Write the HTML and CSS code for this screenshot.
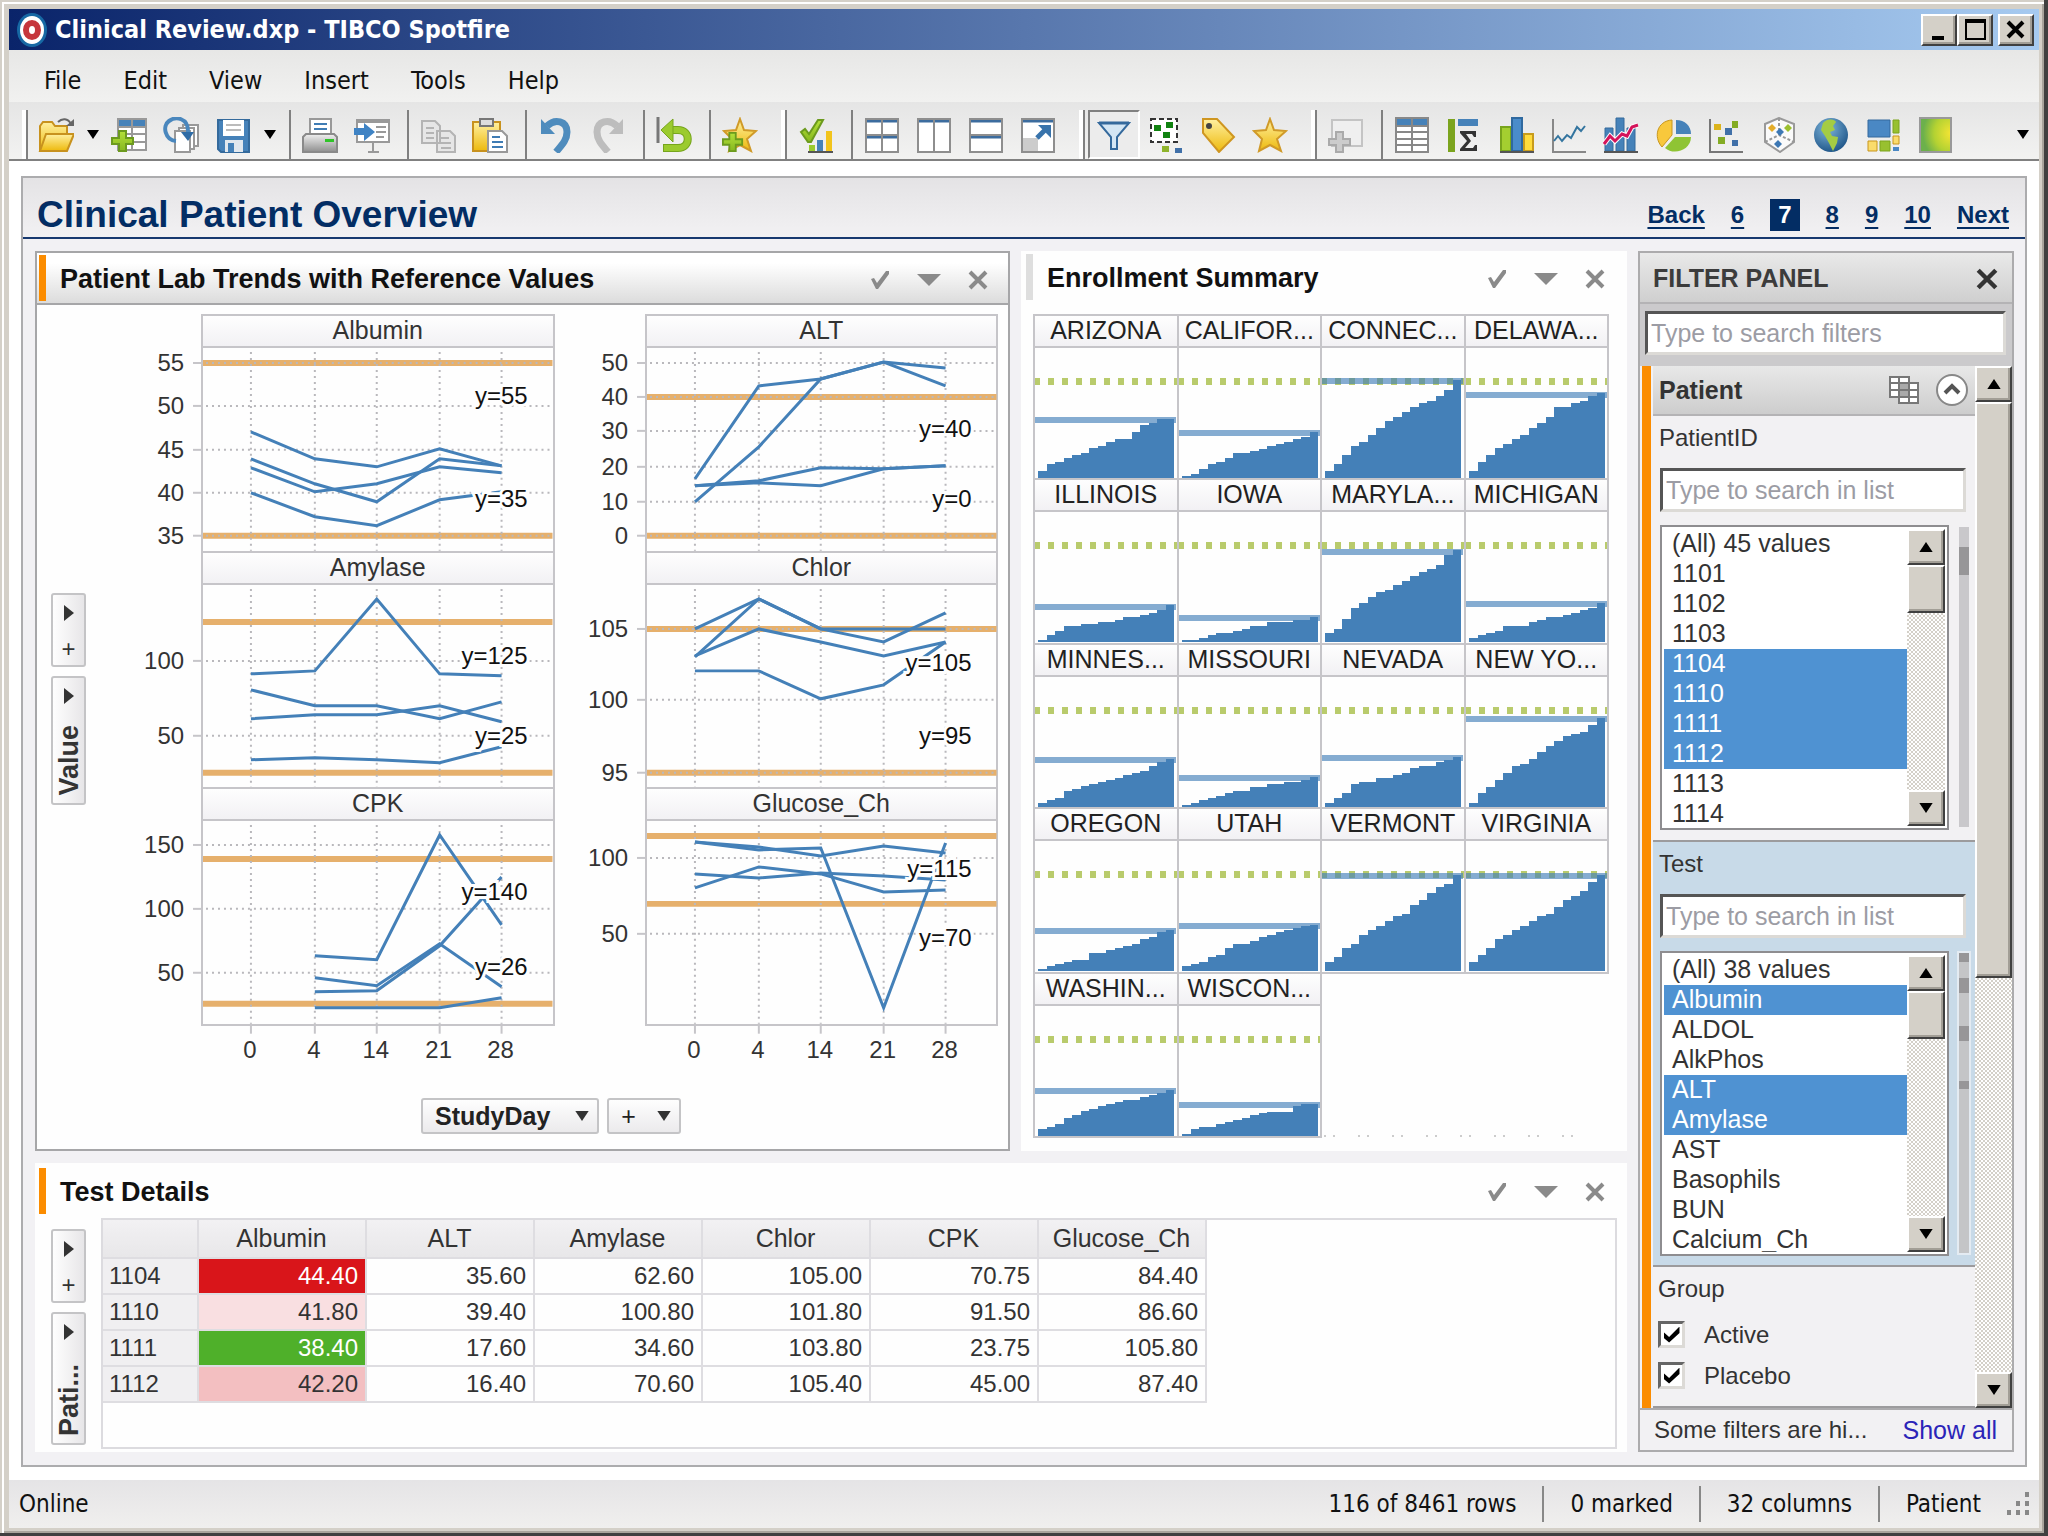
FILE: index.html
```html
<!DOCTYPE html>
<html lang="en">
<head>
<meta charset="utf-8">
<title>Clinical Review.dxp - TIBCO Spotfire</title>
<link rel="stylesheet" href="styles.css">
</head>
<body>
<svg class="defs" aria-hidden="true">
  <defs>
    <linearGradient id="gold" x1="0" y1="0" x2="0" y2="1"><stop offset="0" stop-color="#fff0a0"/><stop offset="1" stop-color="#edb90c"/></linearGradient>
    <linearGradient id="lime" x1="0" y1="0" x2="0" y2="1"><stop offset="0" stop-color="#b4e03a"/><stop offset="1" stop-color="#86b81e"/></linearGradient>
    <linearGradient id="steel" x1="0" y1="0" x2="0" y2="1"><stop offset="0" stop-color="#f0f0f0"/><stop offset="1" stop-color="#8f8f8f"/></linearGradient>
    <radialGradient id="sea" cx=".4" cy=".3" r=".8"><stop offset="0" stop-color="#7fb6dc"/><stop offset="1" stop-color="#154c80"/></radialGradient>
    <radialGradient id="heat" cx="1" cy=".45" r=".9"><stop offset="0" stop-color="#f6e534"/><stop offset=".6" stop-color="#b4d232"/><stop offset="1" stop-color="#6cb04c"/></radialGradient>
    <symbol id="check" viewBox="0 0 20 20"><path d="M1 9l3-1 3 5L16 1h3v3L8 19H6z"/></symbol>
    <symbol id="down" viewBox="0 0 24 12"><path d="M0 0h24L12 12z"/></symbol>
    <symbol id="cross" viewBox="0 0 20 20"><path d="M2 2l16 16M18 2L2 18" fill="none" stroke="currentColor" stroke-width="4"/></symbol>
    <symbol id="caret" viewBox="0 0 12 9"><path d="M0 0h12L6 9z"/></symbol>
    <symbol id="side" viewBox="0 0 10 16"><path d="M0 0l10 8-10 8z"/></symbol>
    <symbol id="star" viewBox="0 0 36 36"><path d="M18 2l4 11 12 1-9 8 4 12-11-6-11 6 3-12-8-8 12-1z" fill="url(#gold)" stroke="#d09a28" stroke-width="2"/></symbol>
    <symbol id="plus" viewBox="0 0 24 24"><path d="M8 2h7v7h7v6h-7v7H8v-7H1V9h7z" fill="url(#lime)" stroke="#6c9a1e" stroke-width="2"/></symbol>
  </defs>
</svg>

<div class="window">
  <header class="titlebar">
    <svg class="app-logo" viewBox="0 0 32 36" width="32" height="36"><ellipse cx="16" cy="18" rx="15" ry="17" fill="#1668a4"/><ellipse cx="16" cy="18" rx="12" ry="14" fill="#fff"/><ellipse cx="16" cy="18" rx="6" ry="7" fill="#fff" stroke="#c6363c" stroke-width="6"/></svg>
    <h1 class="app-title">Clinical Review.dxp - TIBCO Spotfire</h1>
    <div class="win-buttons">
      <button class="bevel win-btn" aria-label="Minimize"><svg viewBox="0 0 28 26"><path d="M7 19h12v4H7z"/></svg></button>
      <button class="bevel win-btn" aria-label="Maximize"><svg viewBox="0 0 28 26"><path d="M4 2h21v21H4zM6 6v15h17V6z" fill-rule="evenodd"/></svg></button>
      <button class="bevel win-btn win-close" aria-label="Close"><svg viewBox="0 0 28 26"><path d="M6 5l15 15M21 5L6 20" stroke="#000" stroke-width="4"/></svg></button>
    </div>
  </header>

  <nav class="menubar">
    <button>File</button><button>Edit</button><button>View</button><button>Insert</button><button>Tools</button><button>Help</button>
  </nav>

  <div class="toolbar">
    <span class="grip grip-first"></span>
    <button class="tool" aria-label="Open"><svg viewBox="0 0 36 36"><path d="M2 34V9l3-4h9l3 4h12v10" fill="url(#gold)" stroke="#c8921e" stroke-width="2"/><path d="M2 34l6-17h28l-7 17z" fill="url(#gold)" stroke="#c8921e" stroke-width="2"/><path d="M20 5c4-4 10-4 13 2" fill="none" stroke="#666" stroke-width="2"/><path d="M28 9h8V2z" fill="#666"/></svg></button>
    <button class="tool-drop" aria-label="Open menu"><svg><use href="#caret"/></svg></button>
    <button class="tool" aria-label="Add data table"><svg viewBox="0 0 36 36"><path d="M7 2h28v31H7z" fill="#fff" stroke="#999" stroke-width="2"/><path d="M8 3h26v6H8z" fill="#4682b9"/><path d="M7 10h28M7 17h28M7 25h28M21 2v31" stroke="#999" stroke-width="2"/><use href="#plus" x="0" y="12" width="24" height="24"/></svg></button>
    <button class="tool" aria-label="Replace data"><svg viewBox="0 0 36 36"><path d="M20 8h15v21H20z" fill="#fff" stroke="#999" stroke-width="2"/><path d="M16 11h15v21H16z" fill="#fff" stroke="#999" stroke-width="2"/><path d="M12 14h15v21H12z" fill="#fff" stroke="#999" stroke-width="2"/><path d="M13 24C2 23-1 9 6 4s19-3 19 10v4" fill="none" stroke="#4a87bd" stroke-width="4"/><path d="M18 15h13l-6 9z" fill="#2f6ca6"/></svg></button>
    <button class="tool" aria-label="Save"><svg viewBox="0 0 36 36"><path d="M3 3h31v32H6l-3-3z" fill="#4682b9" stroke="#346a9c" stroke-width="2"/><path d="M8 3h21v16H8z" fill="#fff"/><path d="M11 8h15M11 13h15" stroke="#bbb" stroke-width="2"/><path d="M10 23h18v12H10z" fill="#e2e8ee"/><path d="M13 26h6v9h-6z" fill="#4682b9"/></svg></button>
    <button class="tool-drop" aria-label="Save menu"><svg><use href="#caret"/></svg></button>
    <span class="sep"></span>
    <button class="tool" aria-label="Print"><svg viewBox="0 0 36 36"><path d="M8 18V2h21v16" fill="#fff" stroke="#999" stroke-width="2"/><path d="M12 7h13M12 12h13" stroke="#3f7cb4" stroke-width="2"/><path d="M1 35V20l3-3h28l3 3v15z" fill="url(#steel)" stroke="#8a8a8a" stroke-width="2"/><path d="M23 22h9v3h-9z" fill="#2fc428"/></svg></button>
    <button class="tool" aria-label="Export"><svg viewBox="0 0 36 36"><path d="M3 4h32v21H3z" fill="#fff" stroke="#999" stroke-width="2"/><path d="M2 2h34v4H2z" fill="#999"/><path d="M22 10h10M22 15h10M22 20h8M19 26v9M14 35h11" stroke="#999" stroke-width="2"/><path d="M0 11h10V6l11 9-11 9v-6H0z" fill="#3f83c4"/></svg></button>
    <span class="sep"></span>
    <button class="tool" aria-label="Copy"><svg viewBox="0 0 36 36"><path d="M2 4h13l5 5v17H2zM17 14h13l5 5v16H17z" fill="#e6e6e6" stroke="#b4b4b4" stroke-width="2"/><path d="M6 11h8M6 16h8M6 21h8M21 21h8M21 26h10M21 31h10" stroke="#b4b4b4" stroke-width="2"/></svg></button>
    <button class="tool" aria-label="Paste"><svg viewBox="0 0 36 36"><path d="M1 5h27v29H1z" fill="url(#gold)" stroke="#c8921e" stroke-width="2"/><path d="M8 2h13v7H8z" fill="#ddd" stroke="#777" stroke-width="2"/><path d="M16 14h14l5 5v16H16z" fill="#fff" stroke="#999" stroke-width="2"/><path d="M20 20h8M20 25h11M20 30h11" stroke="#3f7cb4" stroke-width="2"/></svg></button>
    <span class="sep"></span>
    <button class="tool" aria-label="Undo"><svg viewBox="0 0 36 36"><path d="M9 9c8-8 20-5 20 6 0 8-5 13-11 20" fill="none" stroke="#4f8cbd" stroke-width="7"/><path d="M3 2v15h14z" fill="#4f8cbd"/></svg></button>
    <button class="tool" aria-label="Redo"><svg viewBox="0 0 36 36"><path d="M27 9C19 1 7 4 7 15c0 8 5 13 11 20" fill="none" stroke="#bdbdbd" stroke-width="7"/><path d="M33 2v15H19z" fill="#bdbdbd"/></svg></button>
    <span class="sep"></span>
    <button class="tool" aria-label="Revert"><svg viewBox="0 0 36 36"><path d="M2 0v26" stroke="#777" stroke-width="3"/><path d="M13 13h9c13 0 13 18 0 18H7" fill="none" stroke="#76a51c" stroke-width="8"/><path d="M13 13h9c13 0 13 18 0 18H8" fill="none" stroke="#9bcb2e" stroke-width="6"/><path d="M5 13L17 2v23z" fill="#9bcb2e" stroke="#76a51c"/></svg></button>
    <span class="sep"></span>
    <button class="tool" aria-label="Add bookmark"><svg viewBox="0 0 36 36"><use href="#star" width="36" height="36"/><use href="#plus" x="0" y="14" width="22" height="22"/></svg></button>
    <span class="grip"></span>
    <button class="tool" aria-label="Analysis"><svg viewBox="0 0 36 36"><path d="M3 15l4-3 4 5L20 3h5L13 25h-3z" fill="url(#lime)" stroke="#6c9a1e" stroke-width="2"/><path d="M11 28h6v7h-6z" fill="#9bcb2e"/><path d="M19 23h6v12h-6z" fill="#4682b9"/><path d="M28 14h6v21h-6z" fill="#f2c41c"/><path d="M10 35h25" stroke="#555" stroke-width="2"/></svg></button>
    <span class="sep"></span>
    <button class="tool" aria-label="Tile grid"><svg viewBox="0 0 36 36"><path d="M2 3h32v32H2z" fill="#fff"/><path d="M2 4h32M2 20h32" stroke="#3c6c9e" stroke-width="3"/><path d="M2 2h32v33H2zM18 2v33M2 18h32" fill="none" stroke="#8e8e8e" stroke-width="2"/></svg></button>
    <button class="tool" aria-label="Side by side"><svg viewBox="0 0 36 36"><path d="M2 3h32v32H2z" fill="#fff"/><path d="M2 4h32" stroke="#3c6c9e" stroke-width="3"/><path d="M2 2h32v33H2zM18 2v33" fill="none" stroke="#8e8e8e" stroke-width="2"/></svg></button>
    <button class="tool" aria-label="Stacked"><svg viewBox="0 0 36 36"><path d="M2 3h32v32H2z" fill="#fff"/><path d="M2 4h32M2 20h32" stroke="#3c6c9e" stroke-width="3"/><path d="M2 2h32v33H2zM2 18h32" fill="none" stroke="#8e8e8e" stroke-width="2"/></svg></button>
    <button class="tool" aria-label="Maximize visualization"><svg viewBox="0 0 36 36"><path d="M2 3h32v32H2z" fill="#fff"/><path d="M2 4h32" stroke="#3c6c9e" stroke-width="3"/><path d="M3 21h15v13H3z" fill="#ccc"/><path d="M2 2h32v33H2z" fill="none" stroke="#8e8e8e" stroke-width="2"/><path d="M17 21l9-9" stroke="#3873ab" stroke-width="5"/><path d="M18 8h13v13z" fill="#3873ab"/></svg></button>
    <span class="grip"></span>
    <button class="tool tool-pressed" aria-label="Filters" aria-pressed="true"><svg viewBox="0 0 36 36"><path d="M3 6h30L21 20v12h-6V20z" fill="#d4e6f4" stroke="#34699c" stroke-width="2"/><path d="M3 6h30" stroke="#34699c" stroke-width="3"/></svg></button>
    <button class="tool" aria-label="Marking"><svg viewBox="0 0 36 36"><path d="M3 2h26v23H3z" fill="#fff" stroke="#333" stroke-width="2" stroke-dasharray="5 3"/><path d="M6 8h7v6H6zM18 5h7v6h-7zM15 15h7v6h-7z" fill="#108210"/><path d="M14 29h7v6h-7z" fill="#8fb42c"/><path d="M27 31h7v5h-7z" fill="#4070a8"/></svg></button>
    <button class="tool" aria-label="Tags"><svg viewBox="0 0 36 36"><path d="M3 2h14l17 18-15 15L3 16z" fill="url(#gold)" stroke="#cf9620" stroke-width="2"/><circle cx="9" cy="9" r="3" fill="#444"/></svg></button>
    <button class="tool" aria-label="Bookmarks"><svg viewBox="0 0 36 36"><use href="#star" width="36" height="36"/></svg></button>
    <span class="grip"></span>
    <button class="tool" aria-label="New visualization" disabled><svg viewBox="0 0 36 36"><path d="M4 3h30v26H4z" fill="#efefef" stroke="#c4c4c4" stroke-width="2"/><path d="M8 15h7v7h7v6h-7v7H8v-7H1v-6h7z" fill="#ccc" stroke="#aaa" stroke-width="2"/></svg></button>
    <span class="sep"></span>
    <div class="chart-tools">
      <button class="tool" aria-label="Table"><svg viewBox="0 0 36 36"><path d="M2 1h32v34H2z" fill="#fff" stroke="#888" stroke-width="2"/><path d="M3 2h30v6H3z" fill="#4682b9"/><path d="M2 9h32M2 15h32M2 22h32M2 28h32M18 1v34" stroke="#888" stroke-width="2"/></svg></button>
      <button class="tool" aria-label="Cross table"><svg viewBox="0 0 36 36"><path d="M2 2h7v33H2z" fill="#7ba41e"/><path d="M12 2h20v7H12z" fill="#4682b9"/><path d="M14 14h16v6h-2l-2-3h-6l5 7-6 7h8l2-3h2v6H14v-2l7-8-7-8z" fill="#333"/></svg></button>
      <button class="tool" aria-label="Bar chart"><svg viewBox="0 0 36 36"><path d="M2 10h10v24H2z" fill="#a4cf30" stroke="#78a41c" stroke-width="2"/><path d="M25 17h9v17h-9z" fill="#ffdc3c" stroke="#c89c1c" stroke-width="2"/><path d="M13 1h10v33H13z" fill="#4a8cca" stroke="#2f699f" stroke-width="2"/><path d="M1 35h34" stroke="#555" stroke-width="2"/></svg></button>
      <button class="tool" aria-label="Line chart"><svg viewBox="0 0 36 36"><path d="M2 2v33h33" fill="none" stroke="#888" stroke-width="2"/><path d="M3 24l4-5 4 5 5-6 4 3 6-11 4 4 4-5" fill="none" stroke="#34759f" stroke-width="2"/></svg></button>
      <button class="tool" aria-label="Combination chart"><svg viewBox="0 0 36 36"><path d="M2 11h8v23H2zM13 1h8v33h-8zM24 11h8v23h-8z" fill="#4682b9" stroke="#346a9c"/><path d="M1 27l6-8 5 5 7-7 5 2 5-9 6-2" fill="none" stroke="#fff" stroke-width="5"/><path d="M1 27l6-8 5 5 7-7 5 2 5-9 6-2" fill="none" stroke="#d4145a" stroke-width="3"/><path d="M1 35h34" stroke="#555" stroke-width="2"/></svg></button>
      <button class="tool" aria-label="Pie chart"><svg viewBox="0 0 36 36"><path d="M16 3v15L6 30C-3 20 1 4 16 3z" fill="#f8c83c" stroke="#c8961c" stroke-width="1"/><path d="M20 3c9 0 15 6 15 14H20z" fill="#4682b9"/><path d="M19 20h16c0 13-17 19-26 11z" fill="#8fc434"/></svg></button>
      <button class="tool" aria-label="Scatter plot"><svg viewBox="0 0 36 36"><path d="M2 2v33h33" fill="none" stroke="#777" stroke-width="2"/><path d="M6 7h7v6H6z" fill="#dcb41c"/><path d="M24 4h6v7h-6zM10 20h7v7h-7z" fill="#84ac24"/><path d="M17 11h7v7h-7zM24 23h6v6h-6z" fill="#4070a8"/></svg></button>
      <button class="tool" aria-label="3D scatter plot"><svg viewBox="0 0 36 36"><path d="M4 7l14-6 15 6v18L19 35 4 25z" fill="#fafafa" stroke="#999" stroke-width="2"/><path d="M4 25l14-7 15 7M18 1v17" fill="none" stroke="#999" stroke-width="2" stroke-dasharray="3 2"/><path d="M11 7l4 4-4 4-4-4z" fill="#e4ac28"/><path d="M27 7l4 4-4 4-4-4z" fill="#9cc030"/><path d="M19 11l4 4-4 4-4-4zM17 23l4 4-4 4-4-4z" fill="#3d78b4"/></svg></button>
      <button class="tool" aria-label="Map chart"><svg viewBox="0 0 36 36"><circle cx="18" cy="18" r="17" fill="url(#sea)"/><path d="M10 6c4-5 12-4 13-1l-3 4 2 4-5 2 2 4 6 1-1 6-4 8-4-8-4-7-4-6z" fill="#a4cc44"/></svg></button>
      <button class="tool" aria-label="Treemap"><svg viewBox="0 0 36 36"><path d="M3 3h22v17H3z" fill="#4a88c4" stroke="#34699c"/><path d="M28 3h6v13h-6zM15 24h10v10H15z" fill="#98c030" stroke="#7ca41c"/><path d="M28 19h6v8h-6zM3 24h9v10H3z" fill="#fadc6c" stroke="#c8961c"/><path d="M28 30h6v4h-6z" fill="#4a88c4"/></svg></button>
      <button class="tool" aria-label="Heat map"><svg viewBox="0 0 36 36"><path d="M2 1h31v34H2z" fill="url(#heat)" stroke="#999" stroke-width="2"/></svg></button>
    </div>
    <button class="tool-drop tool-overflow" aria-label="More"><svg><use href="#caret"/></svg></button>
  </div>

  <main class="workspace">
    <section class="page">
      <div class="page-head">
        <h2>Clinical Patient Overview</h2>
        <nav class="pager">
          <a href="#back">Back</a><a href="#6">6</a><a href="#7" class="current" aria-current="page">7</a><a href="#8">8</a><a href="#9">9</a><a href="#10">10</a><a href="#next">Next</a>
        </nav>
      </div>

      <div class="page-body">
        <article class="panel panel-active trends">
          <header class="panel-head">
            <span class="accent"></span>
            <h3>Patient Lab Trends with Reference Values</h3>
            <button aria-label="Apply"><svg width="20" height="20"><use href="#check"/></svg></button>
            <button aria-label="Menu"><svg width="24" height="12"><use href="#down"/></svg></button>
            <button aria-label="Close"><svg width="20" height="20"><use href="#cross"/></svg></button>
          </header>
          <div class="trends-body">
            <div class="axis-buttons">
              <button class="axis-btn" aria-label="Add value"><svg width="10" height="16"><use href="#side"/></svg><span class="axis-plus">+</span></button>
              <button class="axis-btn axis-value"><svg width="10" height="16"><use href="#side"/></svg><span class="turned">Value</span></button>
            </div>
            <div class="trellis-wrap">
              <div class="trellis" id="trends"></div>
              <div class="x-buttons">
                <button class="axis-btn-h">StudyDay<svg width="16" height="10"><use href="#caret"/></svg></button>
                <button class="axis-btn-h axis-btn-add"><span class="thin">+</span><svg width="16" height="10"><use href="#caret"/></svg></button>
              </div>
            </div>
          </div>
        </article>

        <article class="panel enrollment">
          <header class="panel-head">
            <span class="accent"></span>
            <h3>Enrollment Summary</h3>
            <button aria-label="Apply"><svg width="20" height="20"><use href="#check"/></svg></button>
            <button aria-label="Menu"><svg width="24" height="12"><use href="#down"/></svg></button>
            <button aria-label="Close"><svg width="20" height="20"><use href="#cross"/></svg></button>
          </header>
          <div class="states" id="states"></div>
        </article>

        <article class="panel details">
          <header class="panel-head">
            <span class="accent accent-on"></span>
            <h3>Test Details</h3>
            <button aria-label="Apply"><svg width="20" height="20"><use href="#check"/></svg></button>
            <button aria-label="Menu"><svg width="24" height="12"><use href="#down"/></svg></button>
            <button aria-label="Close"><svg width="20" height="20"><use href="#cross"/></svg></button>
          </header>
          <div class="details-body">
            <div class="axis-buttons">
              <button class="axis-btn" aria-label="Add column"><svg width="10" height="16"><use href="#side"/></svg><span class="axis-plus">+</span></button>
              <button class="axis-btn axis-value"><svg width="10" height="16"><use href="#side"/></svg><span class="turned">Pati...</span></button>
            </div>
            <div class="table-box">
              <table>
                <thead><tr><th></th><th>Albumin</th><th>ALT</th><th>Amylase</th><th>Chlor</th><th>CPK</th><th>Glucose_Ch</th></tr></thead>
                <tbody>
                  <tr><th>1104</th><td class="high">44.40</td><td>35.60</td><td>62.60</td><td>105.00</td><td>70.75</td><td>84.40</td></tr>
                  <tr><th>1110</th><td class="mild">41.80</td><td>39.40</td><td>100.80</td><td>101.80</td><td>91.50</td><td>86.60</td></tr>
                  <tr><th>1111</th><td class="low">38.40</td><td>17.60</td><td>34.60</td><td>103.80</td><td>23.75</td><td>105.80</td></tr>
                  <tr><th>1112</th><td class="raised">42.20</td><td>16.40</td><td>70.60</td><td>105.40</td><td>45.00</td><td>87.40</td></tr>
                </tbody>
              </table>
            </div>
          </div>
        </article>

        <aside class="filters">
          <header class="filters-head"><h3>FILTER PANEL</h3><button aria-label="Close filters"><svg width="22" height="22"><use href="#cross"/></svg></button></header>
          <div class="filters-search"><input class="field" type="text" aria-label="Search filters" placeholder="Type to search filters"></div>
          <div class="filters-main">
            <div class="filters-list">
              <header class="group-head">
                <h4>Patient</h4>
                <svg viewBox="0 0 30 30" width="30" height="30"><path d="M1 2h19v20H1z" fill="#fff" stroke="#777" stroke-width="2"/><path d="M1 8h19M1 15h19M10 2v20" stroke="#777" stroke-width="2"/><path d="M10 8h19v20H10z" fill="#fff" stroke="#777" stroke-width="2"/><path d="M11 9h9v12h-9z" fill="#aaa"/><path d="M10 15h19M10 22h19M20 8v20" stroke="#777" stroke-width="2"/></svg>
                <button aria-label="Collapse"><svg viewBox="0 0 34 34" width="34" height="34"><circle cx="17" cy="17" r="15" fill="#fff" stroke="#888" stroke-width="2"/><path d="M10 20l7-7 7 7" fill="none" stroke="#555" stroke-width="4"/></svg></button>
              </header>
              <section class="filter">
                <label for="patient-search">PatientID</label>
                <input class="field" id="patient-search" type="text" placeholder="Type to search in list">
                <div class="list-row">
                  <div class="list-box">
                    <select multiple size="10" aria-label="PatientID values">
                      <option>(All) 45 values</option><option>1101</option><option>1102</option><option>1103</option><option selected>1104</option><option selected>1110</option><option selected>1111</option><option selected>1112</option><option>1113</option><option>1114</option>
                    </select>
                    <div class="scroll"><button class="bevel" aria-label="Scroll up"><svg><use href="#caret"/></svg></button><div class="bevel thumb"></div><button class="bevel scroll-down" aria-label="Scroll down"><svg><use href="#caret"/></svg></button></div>
                  </div>
                  <div class="range range-patient"></div>
                </div>
              </section>
              <section class="filter filter-active">
                <label for="test-search">Test</label>
                <input class="field" id="test-search" type="text" placeholder="Type to search in list">
                <div class="list-row">
                  <div class="list-box">
                    <select multiple size="10" aria-label="Test values">
                      <option>(All) 38 values</option><option selected>Albumin</option><option>ALDOL</option><option>AlkPhos</option><option selected>ALT</option><option selected>Amylase</option><option>AST</option><option>Basophils</option><option>BUN</option><option>Calcium_Ch</option>
                    </select>
                    <div class="scroll"><button class="bevel" aria-label="Scroll up"><svg><use href="#caret"/></svg></button><div class="bevel thumb"></div><button class="bevel scroll-down" aria-label="Scroll down"><svg><use href="#caret"/></svg></button></div>
                  </div>
                  <div class="range range-test"></div>
                </div>
              </section>
              <fieldset class="filter filter-checks">
                <legend>Group</legend>
                <label><input type="checkbox" checked>Active</label>
                <label><input type="checkbox" checked>Placebo</label>
              </fieldset>
            </div>
            <div class="scroll scroll-main"><button class="bevel" aria-label="Scroll up"><svg><use href="#caret"/></svg></button><div class="bevel thumb"></div><button class="bevel scroll-down" aria-label="Scroll down"><svg><use href="#caret"/></svg></button></div>
          </div>
          <footer class="filters-foot"><span>Some filters are hi...</span><a href="#all">Show all</a></footer>
        </aside>
      </div>
    </section>
  </main>

  <footer class="statusbar">
    <span class="online">Online</span><span>116 of 8461 rows</span><span>0 marked</span><span>32 columns</span><span class="last">Patient</span>
    <svg class="size-grip" viewBox="0 0 24 24" width="24" height="24"><path d="M18 0h4v5h-4zM18 9h4v5h-4zM9 9h4v5H9zM18 18h4v5h-4zM9 18h4v5H9zM0 18h4v5H0z" fill="#888"/></svg>
  </footer>
</div>
<script src="script.js"></script>
</body>
</html>
```
FILE: styles.css
```css
* { box-sizing: border-box; }

body {
  margin: 0;
  font-family: "Liberation Sans", Arial, sans-serif;
  font-size: 24px;
  color: #333;
}

h1, h2, h3, h4 { margin: 0; font-weight: bold; }
button { margin: 0; padding: 0; border: 0; background: none; font: inherit; color: inherit; }
svg { display: block; }
.defs { position: absolute; width: 0; height: 0; }

/* Window frame */
.window {
  display: flex;
  flex-direction: column;
  min-height: 100vh;
  padding: 9px;
  background: #d4d0c8;
  box-shadow: inset -4px -4px #404040, inset 2px 2px #d4d0c8, inset 4px 4px #fff, inset -6px -6px #a8a49c;
}

.titlebar {
  display: flex;
  align-items: center;
  height: 41px;
  padding: 0 5px 0 7px;
  background: linear-gradient(90deg, #0a246a, #a6caf0);
}
.app-title {
  flex: 1;
  margin-left: 7px;
  font: bold 25px "DejaVu Sans Condensed", "DejaVu Sans", sans-serif;
  color: #fff;
}
.win-buttons { display: flex; }
.win-btn { width: 36px; height: 32px; }
.win-btn svg { width: 28px; height: 26px; }
.win-close { margin-left: 5px; }

.bevel {
  display: flex;
  align-items: center;
  justify-content: center;
  background: #d4d0c8;
  border: 2px solid;
  border-color: #fff #404040 #404040 #fff;
  box-shadow: inset -2px -2px #a29e96;
}

.menubar {
  display: flex;
  gap: 42px;
  align-items: center;
  height: 52px;
  padding: 8px 35px 0;
  background: linear-gradient(#e7e7e6, #f1f1f0);
  font: 25px "DejaVu Sans Condensed", "DejaVu Sans", sans-serif;
  color: #111;
}

/* Toolbar */
.toolbar {
  display: flex;
  height: 59px;
  padding: 8px 6px 0 13px;
  background: linear-gradient(#e5e5e5, #f2f2f1);
  border-bottom: 2px solid #808080;
}
.tool {
  display: flex;
  align-items: center;
  justify-content: center;
  width: 52px;
  height: 49px;
}
.tool svg { width: 36px; height: 36px; }
.tool-pressed { border: 2px solid; border-color: #808080 #fff #fff #808080; background: #ececec; }
.tool-drop { display: flex; align-items: center; justify-content: center; width: 21px; }
.tool-drop svg { width: 12px; height: 9px; }
.tool-overflow { margin-left: auto; }
.sep { width: 14px; border-right: 2px solid #808080; margin-right: 3px; margin-left: -3px; }
.grip {
  width: 24px;
  border-right: 2px solid #808080;
  margin: 0 3px 0 -3px;
  background: linear-gradient(90deg, transparent 18px, #fff 18px);
}
.grip-first { width: 6px; margin: 0 2px 0 0; background: #fff; }
.chart-tools { display: grid; grid-template-columns: repeat(11, 1fr); width: 576px; }

/* Page */
.workspace { flex: 1; display: flex; padding: 15px 12px 13px; background: #fff; }
.page { flex: 1; display: flex; flex-direction: column; border: 2px solid #acacae; background: #f2f1f4; }
.page-head {
  display: flex;
  justify-content: space-between;
  align-items: center;
  height: 61px;
  padding: 14px 16px 0 14px;
  background: linear-gradient(#e4e3e5, #f2f1f3);
  border-bottom: 2px solid #17396f;
}
.page-head h2 { font-size: 37px; color: #032d64; }
.pager { display: flex; align-items: center; gap: 26px; font-weight: bold; color: #032d64; }
.pager a { color: inherit; text-underline-offset: 4px; text-decoration-thickness: 2px; }
.pager .current {
  padding: 2px 8px;
  background: #032d64;
  color: #fff;
  text-decoration: none;
}

.page-body {
  flex: 1;
  display: grid;
  grid-template-columns: 975fr 606fr 376px;
  grid-template-rows: auto 289px;
  gap: 12px 11px;
  padding: 12px 11px 13px 12px;
}

.panel { background: #fefefe; }
.panel-head {
  display: flex;
  align-items: center;
  height: 52px;
  padding: 0 8px 0 5px;
  color: #8a8a8a;
  fill: #8a8a8a;
}
.panel-head h3 { flex: 1; padding-top: 3px; font-size: 27px; color: #111; }
.panel-head button { display: flex; align-items: center; justify-content: center; width: 49px; height: 40px; padding-top: 3px; }
.accent { width: 7px; height: 46px; margin-right: 14px; background: #dedede; }
.accent-on, .panel-active .accent { background: #fb8c00; }
.panel-active { border: 2px solid #a6a6a8; }
.panel-active .panel-head {
  padding: 0 6px 0 2px;
  background: linear-gradient(#fff 20%, #dcdcdc);
  border-bottom: 2px solid #a6a6a8;
}

/* Lab trends */
.trends-body { display: flex; padding: 9px 10px 15px 14px; }
.axis-buttons { display: flex; flex-direction: column; gap: 9px; width: 35px; }
.trends .axis-buttons { padding-top: 279px; }
.axis-btn {
  display: flex;
  flex-direction: column;
  align-items: center;
  justify-content: space-between;
  height: 74px;
  padding: 10px 0 4px;
  border: 2px solid #c4c4c6;
  border-radius: 3px;
  background: linear-gradient(90deg, #fefefe, #e7e6e8);
  fill: #333;
}
.axis-value { height: 129px; padding-bottom: 7px; font-size: 27px; font-weight: bold; color: #333; }
.axis-plus { line-height: 24px; }
.turned { writing-mode: vertical-rl; transform: rotate(180deg); line-height: 30px; }
.trellis-wrap { flex: 1; padding-left: 115px; }
.trellis { display: grid; grid-template-columns: 1fr 1fr; column-gap: 90px; }
.facet { border: 2px solid #c6c5c9; border-bottom: 0; }
.facet-end { border-bottom: 2px solid #c6c5c9; }
.facet h4, .state h4 {
  height: 32px;
  line-height: 29px;
  border-bottom: 2px solid #c6c5c9;
  background: linear-gradient(#fefefe, #f2f1f4);
  font-size: 25px;
  font-weight: normal;
  text-align: center;
  white-space: nowrap;
}
.plot { width: 100%; overflow: visible; font-size: 24px; }
.plot .grid { stroke: #b9b8bc; stroke-width: 2; stroke-dasharray: 2 4; fill: none; }
.plot .tick { stroke: #c6c5c9; stroke-width: 2; }
.plot .limit { stroke: #e6b06c; stroke-width: 6; }
.plot .trace { stroke: #4480b8; stroke-width: 3; fill: none; }
.plot text { fill: #333; }
.plot .note { fill: #111; stroke: #fefefe; stroke-width: 6; paint-order: stroke; }
.x-buttons { display: flex; justify-content: center; gap: 8px; margin: 72px 97px 0 0; }
.axis-btn-h {
  display: flex;
  align-items: center;
  gap: 24px;
  height: 36px;
  padding: 0 7px 0 12px;
  border: 2px solid #c4c4c6;
  border-radius: 3px;
  background: linear-gradient(#fefefe, #ebeaec);
  font-size: 25px;
  font-weight: bold;
  color: #222;
  fill: #333;
}
.axis-btn-add { gap: 20px; }
.thin { font-weight: normal; }

/* Enrollment */
.states { display: grid; grid-template-columns: repeat(4, 1fr); margin: 11px 20px 0 12px; color: #222; }
.state { margin: 0 -2px -2px 0; border: 2px solid #c6c5c9; }
.states-rest {
  grid-column: 3 / 5;
  align-self: end;
  height: 2px;
  margin: 0 30px -1px 4px;
  background: repeating-linear-gradient(90deg, #ccc 0 2px, transparent 2px 9px, #ccc 9px 11px, transparent 11px 34px);
}
.bars { width: 100%; shape-rendering: crispEdges; }
.bars .target { stroke: #b9cb6c; stroke-width: 7; stroke-dasharray: 6 8; }
.bars .level { stroke: #4480b8; stroke-opacity: .65; stroke-width: 6; }
.bars .steps { fill: #4480b8; }

/* Test details */
.details { grid-column: 1 / 3; display: flex; flex-direction: column; }
.details .panel-head { height: 55px; padding-left: 4px; }
.details-body { flex: 1; display: flex; gap: 15px; padding: 0 10px 3px 16px; }
.details .axis-buttons { padding-top: 11px; }
.details .axis-value { height: 133px; }
.table-box { flex: 1; border: 2px solid #dcdbdf; background: #fefefe; }
table { border-collapse: collapse; table-layout: fixed; width: 1104px; }
th, td { height: 36px; padding: 0 7px 0 6px; border: 2px solid #dedde1; border-top: 0; border-left: 0; text-align: right; font-weight: normal; width: 168px; }
th { background: #f0eff1; text-align: left; }
thead th { height: 38px; font-size: 25px; text-align: center; background: linear-gradient(#f2f1f3, #e8e7e9); }
th:first-child { width: 95px; }
.high { background: #d9151a; color: #fff; }
.mild { background: #f9dfe1; }
.low { background: #4fb02a; color: #fff; }
.raised { background: #f3bfc1; }

/* Filter panel */
.filters { grid-column: 3; grid-row: 1 / 3; display: flex; flex-direction: column; border: 2px solid #acabad; background: #f2f1f3; }
.filters-head {
  display: flex;
  align-items: center;
  justify-content: space-between;
  height: 51px;
  padding: 2px 14px 0 13px;
  background: linear-gradient(#e9e9e9, #cfcfcf);
  border-bottom: 2px solid #b4b3b5;
}
.filters-head h3 { font-size: 25px; color: #3c3c3c; }
.filters-search { padding: 7px 6px 11px 5px; background: #cbcacc; }
.field {
  display: block;
  width: 100%;
  height: 44px;
  padding: 0 3px;
  border: 3px solid;
  border-color: #555 #dcdad6 #dcdad6 #555;
  border-radius: 0;
  background: #fff;
  font: inherit;
  font-size: 25px;
}
.field::placeholder { color: #9c9ca4; opacity: 1; }
.filters-main { flex: 1; display: flex; }
.filters-list { flex: 1; margin-left: 2px; padding-left: 2px; border-left: 9px solid #fb8c00; }
.group-head {
  display: flex;
  align-items: center;
  height: 50px;
  padding: 0 6px;
  background: linear-gradient(#e8e8e8, #cdcdcd);
  border-bottom: 2px solid #b4b3b5;
}
.group-head h4 { flex: 1; font-size: 25px; }
.group-head button { margin-left: 16px; }
.filter { margin: 0; padding: 8px 6px 10px; border: 0; border-bottom: 2px solid #9c9b9d; }
.filter > label { display: block; height: 44px; }
.filter .field { width: calc(100% - 4px); margin: 0 0 13px 1px; }
.list-row { display: flex; justify-content: space-between; margin-left: 1px; }
.list-box { display: flex; width: 289px; height: 305px; padding: 2px; border: 2px solid #8e8d90; background: #fff; }
.list-box select {
  flex: 1;
  min-width: 0;
  margin: 0;
  padding: 0;
  border: 0;
  outline: 0;
  appearance: none;
  overflow: hidden;
  background: #fff;
  font: inherit;
  font-size: 25px;
  color: #333;
}
.list-box option { height: 30px; min-height: 0; line-height: 30px; padding: 0 8px; }
.list-box option:checked { background: #4f92d2 linear-gradient(#4f92d2, #4f92d2); color: #fff; }
.filter-active { background: #c8dae8; padding-bottom: 9px; }
.filter-checks { display: flex; flex-direction: column; padding: 8px 5px 10px; }
.filter-checks legend { float: left; margin-bottom: 11px; padding: 0; line-height: 28px; }
.filter-checks label { display: flex; align-items: center; gap: 19px; height: 41px; }
.filter-checks input {
  appearance: none;
  display: flex;
  align-items: center;
  justify-content: center;
  width: 27px;
  height: 27px;
  margin: 0;
  border: 3px solid;
  border-color: #666 #dcdad6 #dcdad6 #666;
  background: #fff;
}
.filter-checks input:checked::before {
  content: "";
  width: 16px;
  height: 16px;
  background: #000;
  clip-path: polygon(0 35%, 35% 65%, 100% 0, 100% 40%, 35% 100%, 0 70%);
}
.range { width: 10px; height: 300px; margin-top: 2px; }
.range-patient { background: linear-gradient(#c9c8cb 20px, #979698 20px, #979698 48px, #c9c8cb 48px); }
.range-test {
  background: linear-gradient(#979698 9px, #c4c5c7 9px, #c4c5c7 25px, #979698 25px, #979698 40px, #c4c5c7 40px, #c4c5c7 73px, #979698 73px, #979698 88px, #c4c5c7 88px, #c4c5c7 128px, #979698 128px, #979698 136px, #c4c5c7 136px);
  outline: 2px solid #e4ebf2;
}
.scroll {
  display: flex;
  flex-direction: column;
  width: 38px;
  background: repeating-conic-gradient(#d4d0c8 0 25%, #fff 0 50%) 0 0 / 4px 4px;
}
.scroll .bevel { height: 36px; }
.scroll button svg { width: 18px; height: 10px; transform: rotate(180deg); }
.scroll .scroll-down { margin-top: auto; }
.scroll .scroll-down svg { transform: none; }
.scroll .thumb { height: 48px; }
.scroll-main { width: 37px; }
.scroll-main .thumb { height: 576px; }
.filters-foot {
  display: flex;
  justify-content: space-between;
  align-items: center;
  height: 42px;
  padding: 0 15px 0 14px;
  border-top: 2px solid #acabad;
}
.filters-foot a { color: #2b24b8; font-size: 25px; text-decoration: none; }

/* Status bar */
.statusbar {
  display: flex;
  align-items: center;
  height: 48px;
  padding: 0 8px 0 10px;
  background: linear-gradient(#e5e4e6, #f0efee);
  font: 24px "DejaVu Sans Condensed", "DejaVu Sans", sans-serif;
  color: #111;
}
.statusbar span { padding: 4px 26px; border-right: 2px solid #888; }
.statusbar .online { flex: 1; padding: 4px 0; border: 0; }
.statusbar .last { border: 0; }
```
FILE: script.js
```js
// Plot geometry: x positions of the study days, y positions of ticks, limits and traces.
const DAYS = [[50, '0'], [114, '4'], [176, '14'], [239, '21'], [301, '28']];

const FACETS = [
  { name: 'Albumin', ticks: [[16, '55'], [59, '50'], [103, '45'], [146, '40'], [189, '35']],
    limits: [16, 189], notes: [[57, 'y=55'], [160, 'y=35']],
    traces: [[85, 112, 120, 102, 119], [112, 137, 155, 112, 119], [121, 145, 137, 120, 126], [146, 170, 179, 153, 145]] },
  { name: 'ALT', ticks: [[16, '50'], [50, '40'], [84, '30'], [120, '20'], [155, '10'], [189, '0']],
    limits: [50, 189], notes: [[90, 'y=40'], [160, 'y=0']],
    traces: [[132, 39, 32, 15, 21], [155, 100, 32, 15, 39], [139, 134, 121, 122, 119], [139, 136, 139, 122, 119]] },
  { name: 'Amylase', ticks: [[77, '100'], [152, '50']],
    limits: [38, 189], notes: [[80, 'y=125'], [160, 'y=25']],
    traces: [[90, 87, 15, 90, 92], [106, 122, 122, 135, 118], [135, 131, 131, 122, 138], [176, 174, 176, 179, 163]] },
  { name: 'Chlor', ticks: [[45, '105'], [116, '100'], [189, '95']],
    limits: [45, 189], notes: [[87, 'y=105'], [160, 'y=95']],
    traces: [[45, 15, 45, 45, 45], [73, 15, 45, 58, 29], [72, 45, 58, 72, 58], [87, 87, 115, 101, 58]] },
  { name: 'CPK', last: true, ticks: [[25, '150'], [89, '100'], [153, '50']],
    limits: [39, 184], notes: [[80, 'y=140'], [155, 'y=26']],
    traces: [[null, 136, 140, 15, 105], [null, 158, 166, 124, 167], [null, 172, 171, 126, 57], [null, 188, 188, 188, 178]] },
  { name: 'Glucose_Ch', last: true, ticks: [[38, '100'], [114, '50']],
    limits: [16, 84], notes: [[57, 'y=115'], [126, 'y=70']],
    traces: [[22, 27, 36, 26, 33], [22, 30, 28, 188, 23], [54, 58, 53, 56, 60], [68, 47, 54, 72, 70]] }
];

// Cumulative enrollment per state: label, level line, bar heights.
const STATES = [
  ['ARIZONA', 58, [7, 14, 16, 20, 23, 25, 30, 32, 36, 39, 39, 46, 53, 55, 59, 59]],
  ['CALIFOR...', 45, [2, 4, 9, 14, 16, 20, 25, 25, 27, 29, 32, 34, 36, 39, 41, 46]],
  ['CONNEC...', 97, [7, 14, 23, 32, 36, 43, 50, 57, 61, 66, 71, 75, 77, 82, 88, 98]],
  ['DELAWA...', 83, [7, 16, 23, 30, 34, 39, 43, 50, 55, 61, 71, 71, 75, 77, 82, 85]],
  ['ILLINOIS', 35, [2, 7, 11, 16, 16, 18, 18, 20, 20, 22, 25, 25, 27, 29, 32, 37]],
  ['IOWA', 24, [2, 2, 4, 7, 9, 9, 11, 13, 16, 16, 20, 20, 20, 22, 22, 25]],
  ['MARYLA...', 90, [9, 13, 23, 34, 39, 45, 50, 52, 57, 61, 66, 70, 73, 77, 87, 92]],
  ['MICHIGAN', 38, [4, 7, 9, 11, 16, 16, 16, 20, 22, 25, 25, 27, 29, 32, 34, 39]],
  ['MINNES...', 47, [4, 7, 9, 16, 18, 21, 23, 25, 27, 29, 32, 34, 36, 41, 45, 48]],
  ['MISSOURI', 29, [2, 4, 7, 9, 11, 14, 16, 16, 20, 20, 23, 23, 25, 25, 27, 30]],
  ['NEVADA', 49, [4, 9, 14, 23, 25, 25, 29, 29, 32, 34, 39, 41, 41, 45, 47, 50]],
  ['NEW YO...', 88, [4, 14, 20, 27, 34, 41, 43, 48, 55, 61, 66, 71, 73, 75, 82, 89]],
  ['OREGON', 40, [2, 5, 7, 9, 11, 11, 18, 18, 21, 23, 25, 27, 32, 34, 39, 41]],
  ['UTAH', 45, [5, 7, 9, 14, 16, 23, 27, 27, 30, 34, 36, 39, 41, 43, 45, 46]],
  ['VERMONT', 95, [9, 14, 23, 27, 36, 41, 45, 50, 55, 57, 66, 71, 78, 84, 87, 96]],
  ['VIRGINIA', 95, [9, 16, 23, 32, 36, 41, 45, 50, 55, 57, 64, 71, 75, 80, 89, 96]],
  ['WASHIN...', 45, [7, 9, 12, 18, 21, 25, 27, 30, 32, 34, 36, 36, 39, 41, 43, 46]],
  ['WISCON...', 31, [2, 7, 9, 9, 12, 14, 16, 18, 21, 23, 24, 24, 24, 30, 32, 32]]
];

function facet(f) {
  const line = (cls, x1, y1, x2, y2) => `<path class="${cls}" d="M${x1} ${y1}L${x2} ${y2}"/>`;
  const parts = [];
  f.limits.forEach(y => parts.push(line('limit', 2, y, 352, y)));
  DAYS.forEach(([x]) => parts.push(line('grid', x, 5, x, 204)));
  f.ticks.forEach(([y, label]) => {
    parts.push(line('grid', 5, y, 352, y), line('tick', -8, y, 0, y));
    parts.push(`<text x="-17" y="${y + 8}" text-anchor="end">${label}</text>`);
  });
  f.traces.forEach(t => {
    const pts = t.map((y, i) => y === null ? '' : `${DAYS[i][0]},${y}`).join(' ');
    parts.push(`<polyline class="trace" points="${pts}"/>`);
  });
  f.notes.forEach(([y, s]) => parts.push(`<text class="note" x="327" y="${y}" text-anchor="end">${s}</text>`));
  if (f.last) {
    DAYS.forEach(([x, d]) => parts.push(line('tick', x, 206, x, 214), `<text x="${x - 1}" y="238" text-anchor="middle">${d}</text>`));
  }
  return `<div class="facet${f.last ? ' facet-end' : ''}"><h4>${f.name}</h4><svg class="plot" viewBox="2 1 350 203">${parts.join('')}</svg></div>`;
}

function state([name, level, bars]) {
  let d = 'M4 131';
  bars.forEach((h, i) => { d += `V${131 - h}H${Math.round(4 + (i + 1) * 8.5)}`; });
  const y = 131 - level;
  return `<div class="state"><h4>${name}</h4><svg class="bars" viewBox="1 1 141 130">` +
    `<path class="target" d="M0 34H143"/><path class="level" d="M1 ${y}H142"/><path class="steps" d="${d}V131z"/></svg></div>`;
}

document.getElementById('trends').innerHTML = FACETS.map(facet).join('');
document.getElementById('states').innerHTML = STATES.map(state).join('') + '<div class="states-rest"></div>';
```
